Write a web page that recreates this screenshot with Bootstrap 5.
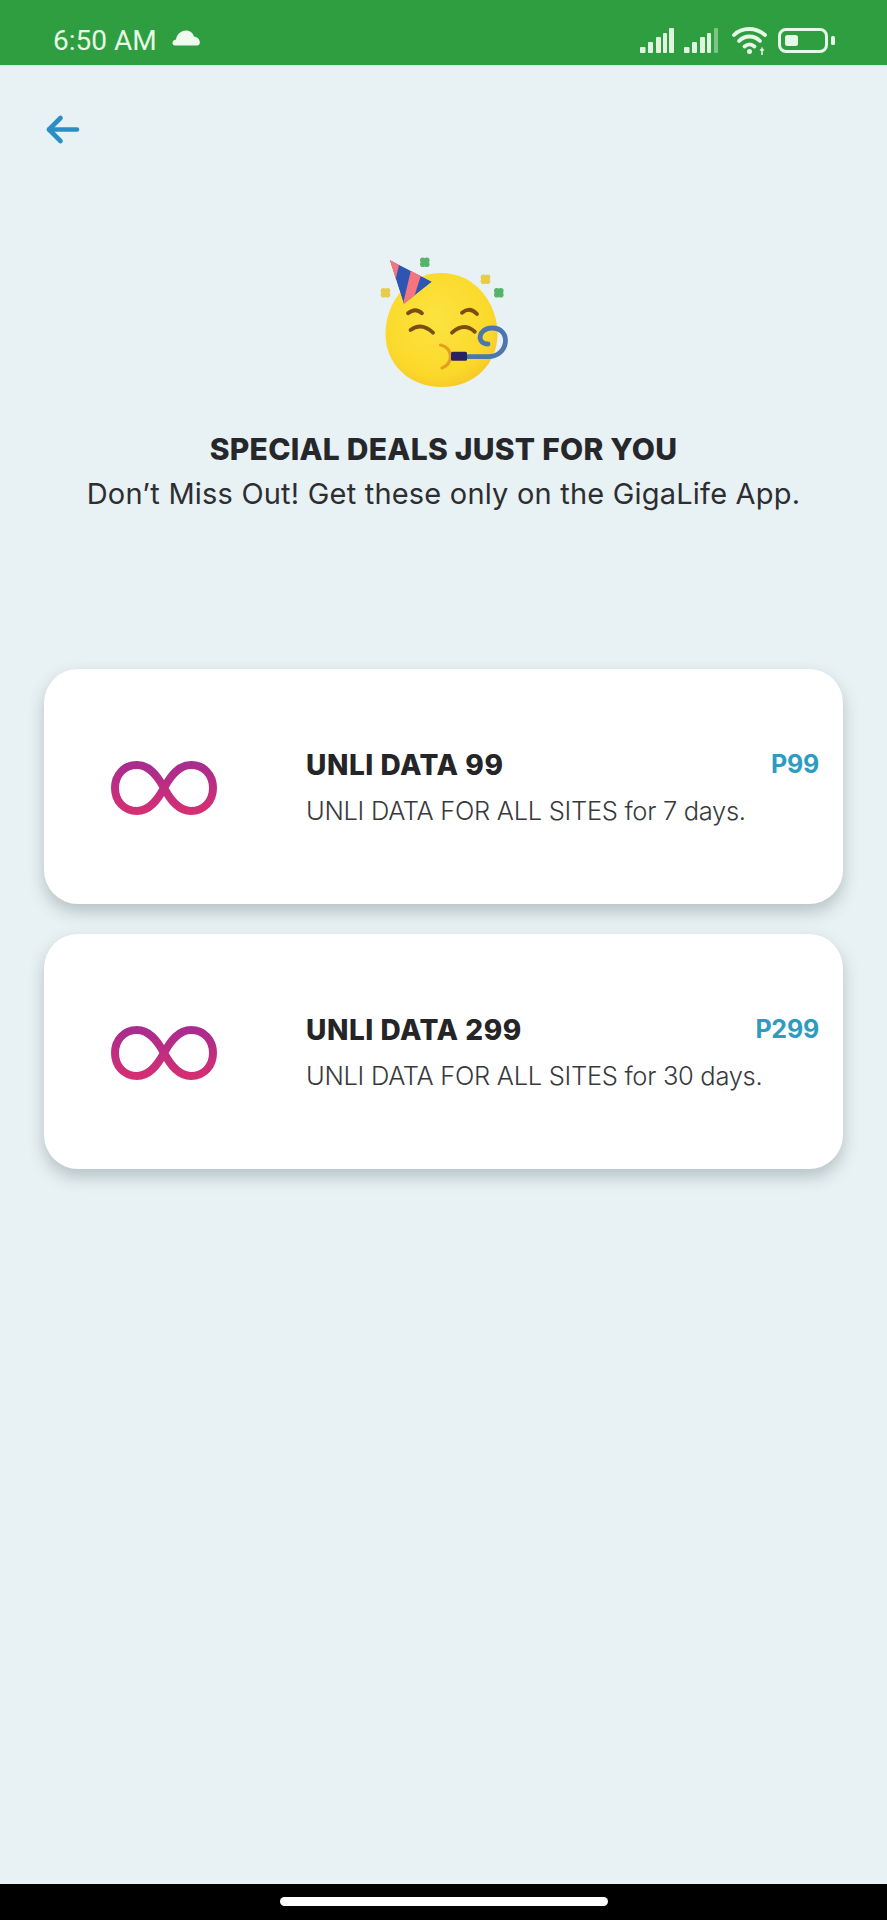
<!DOCTYPE html>
<html lang="en">
<head>
<meta charset="utf-8">
<title>Special deals</title>
<link href="https://cdn.jsdelivr.net/npm/bootstrap@5.3.0/dist/css/bootstrap.min.css" rel="stylesheet">
<style>
html,body{height:1920px;overflow:hidden}
body{background:#e8f1f3;font-family:Inter,"Liberation Sans",sans-serif;color:#252527}
.shell{height:1920px}
.statusbar{height:67px;background:#2f9e41;color:#e6f8e6;padding:16px 52px 0 53px;font-family:Roboto,"Liberation Sans",sans-serif;font-size:28px;line-height:1;border-bottom:2px solid #dcefe4}
.status-cloud{margin-left:15px;margin-top:-5px}
.status-icons{gap:10px}
.content{padding:0 44px}
.backbtn{margin-top:46px;height:33px;padding:0;border:0;background:none;line-height:0}
.hero-art{margin-top:106px;height:135px}
.hero-title{margin:42px 0 0;font-size:30px;line-height:40px;font-weight:800;letter-spacing:.25px;color:#26272b}
.hero-sub{margin:5px 0 0;font-size:29px;line-height:40px;font-weight:400;letter-spacing:.2px;color:#2d2e31}
.deals{margin-top:155px;gap:30px}
.deal{height:235px;border:0;border-radius:34px;background:#fff;box-shadow:0 8px 16px rgba(70,90,95,.3)}
.deal-body{padding:0 24px 0 67px}
.deal-icon{width:195px;flex:none;margin-top:2px}
.deal-title{font-size:28px;line-height:38px;font-weight:800;letter-spacing:.55px;color:#252527;margin:0}
.deal-desc{font-size:25.500px;line-height:38px;font-weight:300;letter-spacing:-.3px;color:#38393c;margin:8px 0 0;white-space:nowrap}
.deal-text{margin-top:3px;min-width:0}
.deal-price{font-size:25px;line-height:34px;font-weight:700;letter-spacing:-.2px;color:#2d9bc2;align-self:flex-start;margin-top:78px;flex:none;margin-left:-60px}
.navbar-bottom{height:36px;background:#000}
.home-pill{width:328px;height:9px;border-radius:5px;background:#fff;margin-top:-1px}
</style>
</head>
<body>
<div class="shell d-flex flex-column">
  <div class="statusbar d-flex align-items-center justify-content-between">
    <div class="d-flex align-items-center">
      <span>6:50 AM</span>
      <svg class="status-cloud" width="28" height="16" viewBox="0 0 28 16"><path fill="#eefaee" d="M3 15.500C-.5 15.500-.5 10 4 9.500 5 4 9 .5 14 .5c4 0 7 2.500 8 6 3.500.5 6 3 5.800 6.200-.1 1.800-1 2.800-2.800 2.800z"/></svg>
    </div>
    <div class="status-icons d-flex align-items-center">
      <svg width="34" height="25" viewBox="0 0 34 25" fill="#dff5df"><rect x="0" y="19" width="5.500" height="6" rx="1"/><rect x="8" y="14" width="5" height="11" rx="1"/><rect x="16" y="9" width="5" height="16" rx="1"/><rect x="23" y="5" width="4" height="20" rx="1"/><rect x="29" y="0" width="5" height="25" rx="1"/></svg>
      <svg width="34" height="25" viewBox="0 0 34 25" fill="#dff5df"><rect x="0" y="19" width="5.500" height="6" rx="1"/><rect x="8" y="14" width="5" height="11" rx="1"/><rect x="16" y="9" width="5" height="16" rx="1"/><rect x="23" y="5" width="4" height="20" rx="1"/><rect x="30" y="0" width="4" height="25" rx="1" opacity=".45"/></svg>
      <svg width="40" height="28" viewBox="0 0 40 28" fill="none" stroke="#e6f8e6" stroke-width="3.800" stroke-linecap="round"><path d="M6 8C14 0 28 0 37 8"/><path d="M11 14C17 8 26 8 32 14"/><path d="M16.500 19.500C20 16.500 23 16.500 26.500 19.500"/><circle cx="21.500" cy="24.500" r="1.500" fill="#e6f8e6" stroke-width="2"/><path d="M34 21v7M32.500 23h3" stroke-width="1.500"/></svg>
      <svg width="57" height="25" viewBox="0 0 57 25" fill="none"><rect x="1.500" y="1.500" width="47" height="22" rx="6.500" stroke="#e6f8e6" stroke-width="3"/><rect x="7" y="7" width="13" height="11" rx="2.500" fill="#e6f8e6"/><rect x="53" y="8" width="4" height="9" rx="1.500" fill="#e6f8e6"/></svg>
    </div>
  </div>

  <main class="content flex-grow-1 d-flex flex-column">
    <div><button class="backbtn" type="button" aria-label="Back">
      <svg width="36" height="33" viewBox="0 0 36 33" fill="none" stroke="#2b8fc6" stroke-width="4.600" stroke-linecap="round" stroke-linejoin="round"><path d="M5 16.500H33"/><path d="M16.500 5 5 16.500 16.500 28"/></svg>
    </button></div>

    <div class="hero-art text-center">
      <svg width="160" height="135" viewBox="0 0 160 135">
        <defs>
          <radialGradient id="face" cx=".45" cy=".4" r=".65"><stop offset="0" stop-color="#fce33f"/><stop offset=".75" stop-color="#fbd92b"/><stop offset="1" stop-color="#f6c626"/></radialGradient>
          <clipPath id="hat"><path d="M25.800 8 68 29.700 39.800 52Z"/></clipPath>
          <g id="clover"><circle cx="-2" cy="-2" r="2.800"/><circle cx="2" cy="-2" r="2.800"/><circle cx="-2" cy="2" r="2.800"/><circle cx="2" cy="2" r="2.800"/></g>
        </defs>
        <path d="M77 21C112 21 133.500 52 133.500 82 133.500 112 110 135 78 135 45 135 21.500 112 21.500 82 21.500 50 44 21 77 21Z" fill="url(#face)"/>
        <g clip-path="url(#hat)">
          <path d="M25.800 8 68 29.700 39.800 52Z" fill="#2f55b4"/>
          <path d="M24 6 35 13 31 30 24 20Z" fill="#f4757f"/>
          <path d="M47 18 57 23 47 55 39 52Z" fill="#f4757f"/>
        </g>
        <use href="#clover" x="60.800" y="10.300" fill="#57b368"/>
        <use href="#clover" x="21.500" y="40.700" fill="#e8cb4a"/>
        <use href="#clover" x="121.500" y="27.300" fill="#e8cb4a"/>
        <use href="#clover" x="134.800" y="40.700" fill="#57b368"/>
        <g fill="none" stroke="#7a4e10" stroke-width="3.800" stroke-linecap="round">
          <path d="M44 61.300Q51.500 55 58 61.300"/><path d="M46.500 78Q57.500 70 69 80.700"/>
          <path d="M98 60.700Q105.800 54 113 62"/><path d="M88 80.700Q99.800 70 110.800 79.700"/>
        </g>
        <path d="M76.500 93Q86 95 86.500 104.700 86 113 78 116" fill="none" stroke="#e2a020" stroke-width="3.200" stroke-linecap="round"/>
        <path d="M102 104.700H124C145 104.700 148 76 128 76 114 76 112 92 124 92" fill="none" stroke="#4d76b0" stroke-width="4.800" stroke-linecap="round"/>
        <rect x="87" y="99.700" width="16" height="9" rx="1.500" fill="#2a2260"/>
      </svg>
    </div>

    <div class="text-center">
      <h1 class="hero-title">SPECIAL DEALS JUST FOR YOU</h1>
      <p class="hero-sub">Don’t Miss Out! Get these only on the GigaLife App.</p>
    </div>

    <div class="deals d-flex flex-column">
      <div class="card deal">
        <div class="deal-body d-flex align-items-center h-100">
          <div class="deal-icon">
            <svg width="106" height="54" viewBox="0 0 106 54" fill="none"><defs><linearGradient id="inf1" x1="0" y1="0" x2="0" y2="1"><stop offset="0" stop-color="#a92c8f"/><stop offset="1" stop-color="#d42f72"/></linearGradient></defs><path d="M53 27C46 14 38 4 26 4 13 4 4 14 4 27S13 50 26 50C38 50 46 40 53 27S68 4 80 4C93 4 102 14 102 27S93 50 80 50C68 50 60 40 53 27Z" stroke="url(#inf1)" stroke-width="8"/></svg>
          </div>
          <div class="deal-text flex-grow-1">
            <h2 class="deal-title">UNLI DATA 99</h2>
            <p class="deal-desc">UNLI DATA FOR ALL SITES for 7 days.</p>
          </div>
          <div class="deal-price">P99</div>
        </div>
      </div>
      <div class="card deal">
        <div class="deal-body d-flex align-items-center h-100">
          <div class="deal-icon">
            <svg width="106" height="54" viewBox="0 0 106 54" fill="none"><path d="M53 27C46 14 38 4 26 4 13 4 4 14 4 27S13 50 26 50C38 50 46 40 53 27S68 4 80 4C93 4 102 14 102 27S93 50 80 50C68 50 60 40 53 27Z" stroke="url(#inf1)" stroke-width="8"/></svg>
          </div>
          <div class="deal-text flex-grow-1">
            <h2 class="deal-title">UNLI DATA 299</h2>
            <p class="deal-desc">UNLI DATA FOR ALL SITES for 30 days.</p>
          </div>
          <div class="deal-price">P299</div>
        </div>
      </div>
    </div>
  </main>

  <div class="navbar-bottom d-flex align-items-center justify-content-center"><div class="home-pill"></div></div>
</div>
<script src="https://cdn.jsdelivr.net/npm/bootstrap@5.3.0/dist/js/bootstrap.bundle.min.js"></script>
</body>
</html>
